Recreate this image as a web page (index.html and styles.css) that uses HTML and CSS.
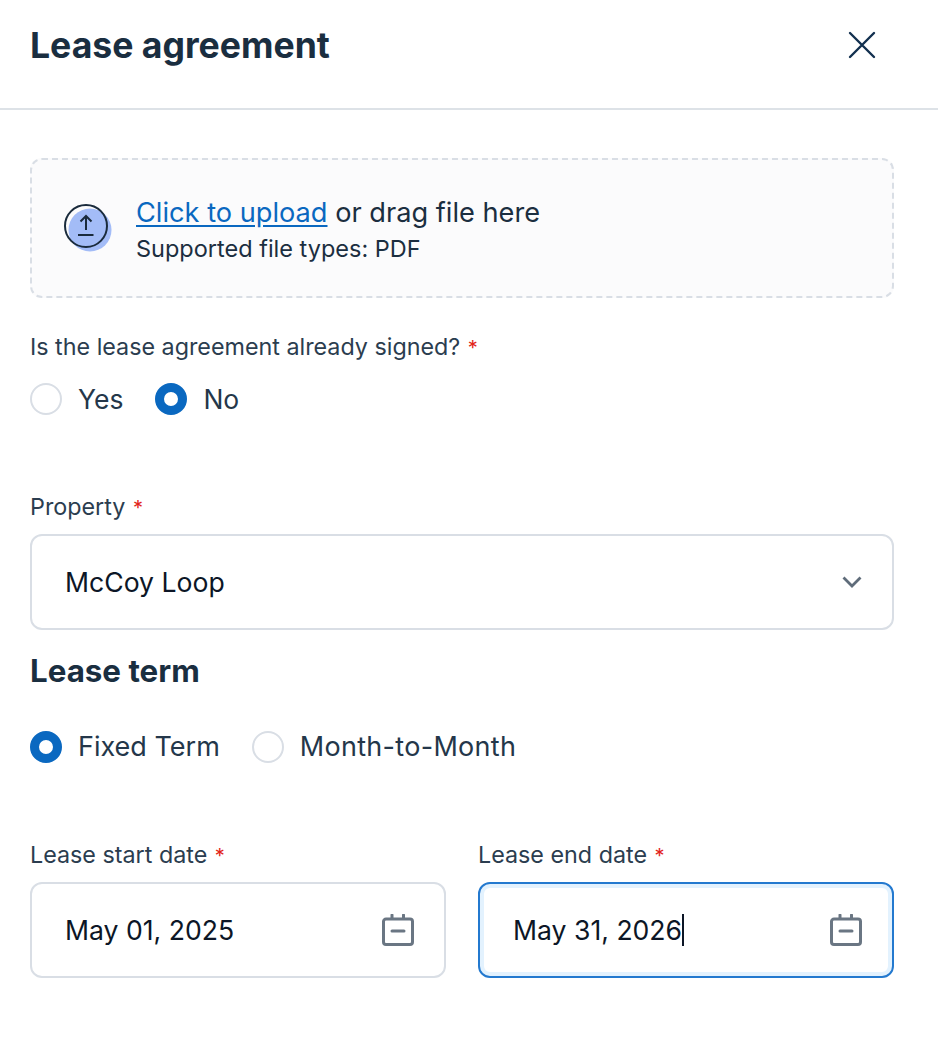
FILE: index.html
```html
<!DOCTYPE html>
<html lang="en">
<head>
<meta charset="utf-8">
<title>Lease agreement</title>
<link rel="stylesheet" href="styles.css">
</head>
<body>
<header class="header">
  <h1 class="title">Lease agreement</h1>
  <svg class="close" width="28" height="28" viewBox="0 0 28 28" fill="none"><path d="M2 2 L26 26 M26 2 L2 26" stroke="#12304f" stroke-width="2.4" stroke-linecap="round"/></svg>
</header>
<main class="content">
  <div class="upload">
    <svg class="upload-icon" width="48" height="48" viewBox="0 0 48 48" fill="none">
      <circle cx="26" cy="26" r="21.5" fill="#a3bcf7"/>
      <circle cx="22" cy="22" r="21" fill="none" stroke="#1a2b3c" stroke-width="2"/>
      <path d="M22 26 V12 M16.500 17.500 L22 12 L27.500 17.500 M14 31 H29.500" stroke="#1a2b3c" stroke-width="2" fill="none"/>
    </svg>
    <div class="upload-text">
      <div class="upload-main"><a class="link">Click to upload</a> or drag file here</div>
      <div class="upload-sub">Supported file types: PDF</div>
    </div>
  </div>

  <div class="label first-label">Is the lease agreement already signed? <span class="req">*</span></div>
  <div class="radios answers">
    <div class="radio-item"><span class="radio"></span>Yes</div>
    <div class="radio-item"><span class="radio on"></span>No</div>
  </div>

  <div class="label prop-label">Property <span class="req">*</span></div>
  <div class="field">
    <span class="value">McCoy Loop</span>
    <svg width="20" height="12" viewBox="0 0 20 12" fill="none"><path d="M1.500 1.500 L10 10 L18.500 1.500" stroke="#5f6c7a" stroke-width="2.800"/></svg>
  </div>

  <h2 class="section">Lease term</h2>
  <div class="radios term">
    <div class="radio-item"><span class="radio on"></span>Fixed Term</div>
    <div class="radio-item wide"><span class="radio"></span>Month-to-Month</div>
  </div>

  <div class="dates">
    <div class="date-col">
      <div class="label date-label">Lease start date <span class="req">*</span></div>
      <div class="field">
        <span class="value">May 01, 2025</span>
        <svg class="cal" width="32" height="32" viewBox="0 0 32 32" fill="none"><path d="M1.500 7.500 a2.500 2.500 0 0 1 2.500-2.500 H28 a2.500 2.500 0 0 1 2.500 2.500 V28 a2.500 2.500 0 0 1-2.500 2.500 H4 a2.500 2.500 0 0 1-2.500-2.500 Z M10 1 V5 M21.500 1 V5 M10 17 H22" stroke="#6a7683" stroke-width="3" stroke-linecap="round"/></svg>
      </div>
    </div>
    <div class="date-col">
      <div class="label date-label">Lease end date <span class="req">*</span></div>
      <div class="field focus">
        <span class="value">May 31, 2026<span class="caret"></span></span>
        <svg class="cal" width="32" height="32" viewBox="0 0 32 32" fill="none"><path d="M1.500 7.500 a2.500 2.500 0 0 1 2.500-2.500 H28 a2.500 2.500 0 0 1 2.500 2.500 V28 a2.500 2.500 0 0 1-2.500 2.500 H4 a2.500 2.500 0 0 1-2.500-2.500 Z M10 1 V5 M21.500 1 V5 M10 17 H22" stroke="#6a7683" stroke-width="3" stroke-linecap="round"/></svg>
      </div>
    </div>
  </div>
</main>
</body>
</html>
```
FILE: styles.css
```css
* { box-sizing: border-box; }
html, body { margin: 0; padding: 0; background: #fff; }
body { width: 938px; height: 1064px; overflow: hidden; font-family: "Inter", "Noto Sans", sans-serif; color: #1b2e40; }
.header { height: 110px; border-bottom: 2px solid #dde2e7; display: flex; align-items: flex-start; justify-content: space-between; padding: 25px 62px 0 30px; }
.title { margin: 0; font-size: 35.600px; line-height: 42px; font-weight: 700; color: #1a2e40; letter-spacing: 0; white-space: nowrap; }
.close { margin-top: 6px; }
.content { padding: 48px 44px 0 30px; }
.upload { height: 140px; border: 2px dashed #d9dee5; border-radius: 12px; background: #fbfbfc; display: flex; align-items: center; padding-left: 32px; gap: 24px; }
.upload-icon { flex: none; }
.upload-text { margin-top: 3px; }
.upload-main { font-size: 27.200px; line-height: 34px; color: #1b2e40; }
.link { color: #0a68c0; text-decoration: underline; text-underline-offset: 3px; }
.upload-sub { font-size: 23.500px; line-height: 30px; margin-top: 4px; color: #1b2e40; }
.label { font-size: 23.300px; line-height: 30px; color: #2b3d4f; }
.req { color: #e2231a; font-size: 20px; margin-left: 1px; }
.first-label { margin-top: 34px; }
.radios { display: flex; gap: 32px; margin-top: 20px; }
.radio-item { display: flex; align-items: center; gap: 16px; font-size: 27px; line-height: 32px; color: #24374a; }
.answers .radio-item { font-size: 26.500px; }
.radio-item.wide { letter-spacing: 0.3px; }
.radio { width: 32px; height: 32px; border-radius: 50%; border: 2px solid #d9dee5; background: #fff; flex: none; }
.radio.on { border: 9px solid #0a68c0; }
.prop-label { margin-top: 77px; }
.field { height: 96px; border: 2px solid #d9dee5; border-radius: 12px; display: flex; align-items: center; justify-content: space-between; padding: 0 30px 0 33px; margin-top: 11px; background: #fff; }
.value { font-size: 26.600px; color: #0c1626; display: flex; align-items: center; }
.section { margin: 21px 0 0; font-size: 31.300px; line-height: 40px; font-weight: 700; color: #1a2e40; }
.radios.term { margin-top: 40px; }
.dates { display: grid; grid-template-columns: 416px 416px; gap: 32px; margin-top: 77px; }
.date-label { margin: 0; }
.dates .field { padding-right: 30px; }
.field.focus { border-color: #2379cf; box-shadow: inset 0 0 0 4px #e3f2fe; }
.caret { display: inline-block; width: 2px; height: 32px; background: #0c1626; margin-left: 0; }
```
